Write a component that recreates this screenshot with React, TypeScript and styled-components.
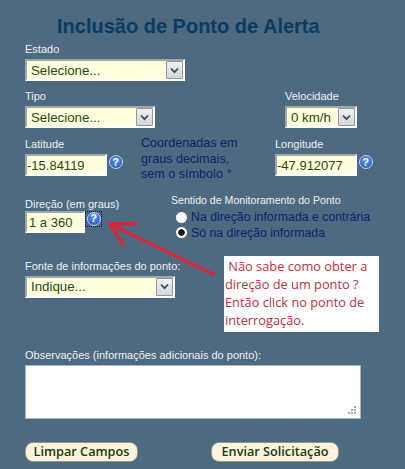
import React from 'react';
import styled, { createGlobalStyle } from 'styled-components';

const GlobalStyle = createGlobalStyle`
  html, body { margin: 0; padding: 0; background: #4d6a80; }
  * { box-sizing: border-box; }
`;

const Page = styled.div`
  position: relative;
  width: 405px;
  height: 469px;
  overflow: hidden;
  padding: 14px 0 0 25px;
  background: #4d6a80;
  font-family: 'Liberation Sans', Arial, sans-serif;
`;

const Title = styled.h1`
  margin: 0 0 4px 32px;
  font-size: 20px;
  line-height: 25px;
  font-weight: bold;
  color: #0b3a63;
`;

const Label = styled.label`
  display: block;
  height: 13px;
  margin-bottom: 3px;
  font-size: 11px;
  line-height: 13px;
  color: #eef2f5;
  white-space: nowrap;
`;

const Row = styled.div<{ $columns: string; $top: number }>`
  display: grid;
  grid-template-columns: ${p => p.$columns};
  margin-top: ${p => p.$top}px;
`;

const SelectWrap = styled.div<{ $width: number }>`
  position: relative;
  width: ${p => p.$width}px;
  height: 22px;
`;

const NativeSelect = styled.select`
  appearance: none;
  display: block;
  width: 100%;
  height: 100%;
  padding: 0 0 0 4px;
  border: 2px solid;
  border-color: #a2a6a8 #fff #fff #a2a6a8;
  border-radius: 0;
  background: #ffffdd;
  color: #1f4a12;
  font-family: inherit;
  font-size: 13.3px;
  outline: none;
`;

const ArrowButton = styled.span`
  position: absolute;
  top: 2px;
  right: 2px;
  width: 17px;
  height: 18px;
  display: flex;
  align-items: center;
  justify-content: center;
  background: linear-gradient(#f0f0f0, #d4d6da);
  border: 1px solid #8f979e;
  border-radius: 1px;
  pointer-events: none;
`;

const Chevron = () => (
  <svg width="9" height="7" viewBox="0 0 9 7">
    <path d="M1 1.500 L4.500 5.200 L8 1.500" fill="none" stroke="#3d4a58" strokeWidth="1.8" />
  </svg>
);

const Combo = ({ width, value }: { width: number; value: string }) => (
  <SelectWrap $width={width}>
    <NativeSelect defaultValue={value}>
      <option>{value}</option>
    </NativeSelect>
    <ArrowButton>
      <Chevron />
    </ArrowButton>
  </SelectWrap>
);

const InputRow = styled.div`
  display: flex;
  align-items: flex-start;
`;

const TextInput = styled.input<{ $width: number; $inset: number }>`
  width: ${p => p.$width}px;
  height: 22px;
  padding: 1px 0 0 ${p => p.$inset}px;
  border: 2px solid;
  border-color: #a2a6a8 #fff #fff #a2a6a8;
  border-radius: 0;
  background: #ffffdd;
  color: #1f4a12;
  font-family: inherit;
  font-size: 13px;
  outline: none;
`;

const HelpLink = styled.a<{ $focused?: boolean }>`
  flex: none;
  width: 17px;
  height: 16px;
  display: flex;
  align-items: center;
  justify-content: center;
  outline: ${p => (p.$focused ? '1px dotted #10104a' : 'none')};
  outline-offset: -1px;
`;

const HelpDot = styled.span`
  width: 14px;
  height: 14px;
  border-radius: 50%;
  display: flex;
  align-items: center;
  justify-content: center;
  background: radial-gradient(circle at 50% 35%, #5f95ea, #1f50b8);
  border: 1px solid #c3d6f2;
  color: #fff;
  font-size: 11px;
  font-weight: bold;
  line-height: 1;
`;

const Help = ({ focused }: { focused?: boolean }) => (
  <HelpLink $focused={focused}>
    <HelpDot>?</HelpDot>
  </HelpLink>
);

const Hint = styled.p`
  margin: -2px 0 0;
  font-size: 12.6px;
  line-height: 15.500px;
  color: #0b1f70;
`;

const DirectionBlock = styled.div`
  padding-top: 4px;
`;

const DirectionLabel = styled(Label)`
  margin-bottom: 0;
`;

const FonteField = styled.div`
  margin-top: 27px;
`;

const SenseLabel = styled(Label)`
  margin-bottom: 3px;
  font-size: 10.6px;
`;

const RadioLine = styled.label`
  display: flex;
  align-items: center;
  gap: 4px;
  height: 15.500px;
  padding-left: 5px;
  font-size: 12.3px;
  color: #0b1f70;
  white-space: nowrap;
`;

const Radio = styled.input`
  appearance: none;
  width: 11px;
  height: 11px;
  margin: 0;
  border-radius: 50%;
  background: #fff;
  flex: none;
  &:checked {
    background: radial-gradient(circle, #1a1a1a 0 3px, #fff 3.5px);
  }
`;

const Notes = styled.div`
  margin-top: 51px;
`;

const NotesBox = styled.div`
  position: relative;
  width: 336px;
  height: 54px;
`;

const NotesArea = styled.textarea`
  display: block;
  width: 100%;
  height: 100%;
  border: 1px solid #a9b6bf;
  background: #fff;
  outline: none;
  border-radius: 0;
  resize: none;
`;

const Grip = styled.svg`
  position: absolute;
  right: 5px;
  bottom: 5px;
`;

const Buttons = styled.div`
  display: flex;
  gap: 73px;
  margin-top: 23px;
`;

const Button = styled.button<{ $width: number }>`
  width: ${p => p.$width}px;
  height: 20px;
  padding: 0;
  border: 1px solid #8d9a80;
  border-radius: 8px;
  background: #fdf2de;
  color: #143c0c;
  font-family: 'Open Sans', sans-serif;
  font-size: 12.7px;
  font-weight: 600;
  line-height: 17px;
`;

const Callout = styled.div`
  position: absolute;
  left: 224px;
  top: 256px;
  width: 155px;
  height: 76px;
  padding: 1px 0 0 1px;
  background: #fff;
  color: #bd3140;
  font-family: 'Open Sans', sans-serif;
  font-size: 12.8px;
  line-height: 18px;
  white-space: pre;
`;

const ArrowOverlay = styled.svg`
  position: absolute;
  left: 0;
  top: 0;
  pointer-events: none;
`;

export default function App() {
  return (
    <>
      <GlobalStyle />
      <Page>
        <Title>Inclusão de Ponto de Alerta</Title>

        <Label>Estado</Label>
        <Combo width={160} value="Selecione..." />

        <Row $columns="260px auto" $top={9}>
          <div>
            <Label>Tipo</Label>
            <Combo width={130} value="Selecione..." />
          </div>
          <div>
            <Label>Velocidade</Label>
            <Combo width={72} value="0 km/h" />
          </div>
        </Row>

        <Row $columns="116px 134px auto" $top={10}>
          <div>
            <Label>Latitude</Label>
            <InputRow>
              <TextInput $width={82} $inset={0} defaultValue="-15.84119" />
              <Help />
            </InputRow>
          </div>
          <Hint>
            Coordenadas em
            <br />
            graus decimais,
            <br />
            sem o símbolo °
          </Hint>
          <div>
            <Label>Longitude</Label>
            <InputRow>
              <TextInput $width={82} $inset={0} defaultValue="-47.912077" />
              <Help />
            </InputRow>
          </div>
        </Row>

        <Row $columns="146px auto" $top={11}>
          <DirectionBlock>
            <DirectionLabel>Direção (em graus)</DirectionLabel>
            <InputRow>
              <TextInput $width={60} $inset={2} defaultValue="1 a 360" />
              <Help focused />
            </InputRow>
            <FonteField>
              <Label>Fonte de informações do ponto:</Label>
              <Combo width={150} value="Indique..." />
            </FonteField>
          </DirectionBlock>
          <div>
            <SenseLabel>Sentido de Monitoramento do Ponto</SenseLabel>
            <RadioLine>
              <Radio type="radio" name="sentido" />
              Na direção informada e contrária
            </RadioLine>
            <RadioLine>
              <Radio type="radio" name="sentido" defaultChecked />
              Só na direção informada
            </RadioLine>
          </div>
        </Row>

        <Notes>
          <Label>Observações (informações adicionais do ponto):</Label>
          <NotesBox>
            <NotesArea />
            <Grip width="8" height="8" viewBox="0 0 8 8" fill="#a8a8a8">
              <rect x="6" y="0" width="2" height="2" />
              <rect x="3" y="3" width="2" height="2" />
              <rect x="6" y="3" width="2" height="2" />
              <rect x="0" y="6" width="2" height="2" />
              <rect x="3" y="6" width="2" height="2" />
              <rect x="6" y="6" width="2" height="2" />
            </Grip>
          </NotesBox>
        </Notes>

        <Buttons>
          <Button $width={113}>Limpar Campos</Button>
          <Button $width={128}>Enviar Solicitação</Button>
        </Buttons>

        <ArrowOverlay width="405" height="469" viewBox="0 0 405 469">
          <path
            d="M215 275 L110 224 M137 223.500 L110 224 L124 246"
            fill="none"
            stroke="#d02a3c"
            strokeWidth="3.5"
          />
        </ArrowOverlay>

        <Callout>{` Não sabe como obter a\ndireção de um ponto ?\nEntão click no ponto de\ninterrogação.`}</Callout>
      </Page>
    </>
  );
}
